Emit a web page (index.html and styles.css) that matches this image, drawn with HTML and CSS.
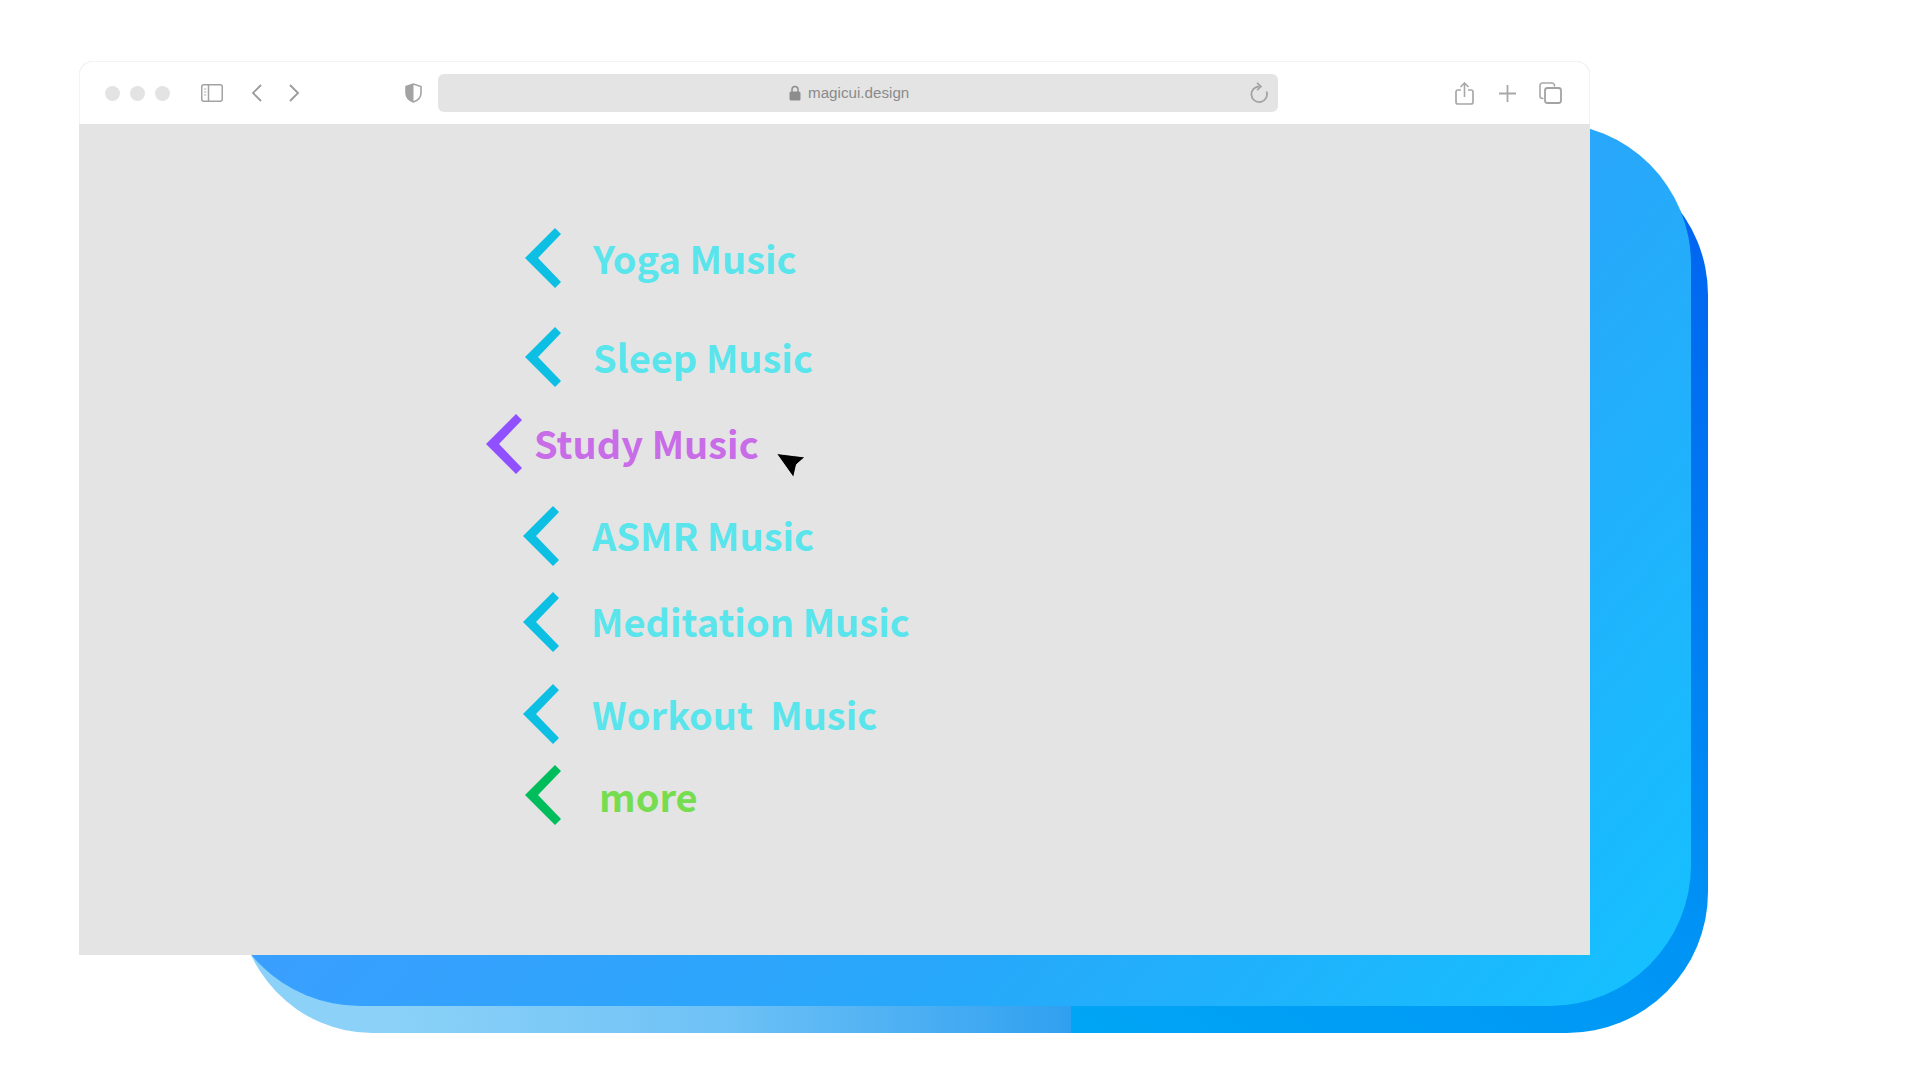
FILE: index.html
```html
<!DOCTYPE html>
<html lang="en">
<head>
<meta charset="utf-8">
<title>magicui.design</title>
<link rel="stylesheet" href="styles.css">
</head>
<body>
<main class="stage">
  <div class="backdrop backdrop-outer"></div>
  <div class="backdrop backdrop-inner"></div>
  <section class="window">
    <header class="toolbar">
      <span class="dot dot-first"></span><span class="dot dot-next"></span><span class="dot dot-next"></span>
      <svg class="tool tool-sidebar" width="22" height="18" viewBox="0 0 22 18" fill="none"><rect x=".75" y=".75" width="20.5" height="16.500" rx="2" stroke="#a3a3a3" stroke-width="1.500"/><path d="M7.500 1v16" stroke="#a3a3a3" stroke-width="1.500"/><path d="M3 5h2.200M3 8h2.200M3 11h2.200" stroke="#b0b0b0" stroke-width="1.200"/></svg>
      <svg class="tool tool-back" width="11" height="18" viewBox="0 0 11 18" fill="none"><path d="M10 1 2 9l8 8" stroke="#9c9c9c" stroke-width="1.900"/></svg>
      <svg class="tool tool-forward" width="11" height="18" viewBox="0 0 11 18" fill="none"><path d="m1 1 8 8-8 8" stroke="#9c9c9c" stroke-width="1.900"/></svg>
      <svg class="tool tool-shield" width="17" height="20" viewBox="0 0 17 20" fill="none"><path d="M8.500 1 1 3.500V10c0 4.500 3.500 7.500 7.500 9 4-1.500 7.500-4.500 7.500-9V3.500L8.500 1Z" stroke="#a3a3a3" stroke-width="1.600"/><path d="M8.500 1 1 3.500V10c0 4.500 3.500 7.500 7.500 9V1Z" fill="#a3a3a3"/></svg>
      <div class="url">
        <svg class="lock" width="12" height="16" viewBox="0 0 12 16" fill="none"><path d="M3 7V4.500a3 3 0 0 1 6 0V7" stroke="#8d8d8d" stroke-width="1.500"/><rect x=".5" y="6.500" width="11" height="9" rx="1.500" fill="#8d8d8d"/></svg>
        <span class="url-text">magicui.design</span>
        <svg class="reload" width="19" height="22" viewBox="0 0 19 22" fill="none"><path d="M10.500 4.500a7.800 7.800 0 1 0 7 5" stroke="#a3a3a3" stroke-width="1.800"/><path d="m8 .8 4 3.800-4 3.600" stroke="#a3a3a3" stroke-width="1.600"/></svg>
      </div>
      <svg class="tool tool-share" width="19" height="23" viewBox="0 0 19 23" fill="none"><path d="M6 8H3a2 2 0 0 0-2 2v10a2 2 0 0 0 2 2h13a2 2 0 0 0 2-2V10a2 2 0 0 0-2-2h-3" stroke="#a8a8a8" stroke-width="1.700"/><path d="M9.500 15V1.500M5.500 5l4-4 4 4" stroke="#a8a8a8" stroke-width="1.600"/></svg>
      <svg class="tool tool-plus" width="17" height="17" viewBox="0 0 17 17" fill="none"><path d="M8.500 0v17M0 8.500h17" stroke="#a8a8a8" stroke-width="1.800"/></svg>
      <svg class="tool tool-tabs" width="23" height="22" viewBox="0 0 23 22" fill="none"><path d="M4.500 16.500H3.500a2.500 2.500 0 0 1-2.500-2.500V3.500A2.500 2.500 0 0 1 3.500 1H13a2.500 2.500 0 0 1 2.500 2.500v1" stroke="#a8a8a8" stroke-width="1.600"/><rect x="6" y="6" width="16" height="15" rx="2.500" stroke="#a3a3a3" stroke-width="1.800"/></svg>
    </header>
    <ul class="menu">
      <li class="item item-yoga">
        <svg class="chev chev-cyan" width="36" height="60" viewBox="0 0 36 60"><polygon points="0,30 30,0 36,6 13,30 36,54 30,60"/></svg>
        <span class="label label-cyan">Yoga Music</span>
      </li>
      <li class="item item-sleep">
        <svg class="chev chev-cyan" width="36" height="60" viewBox="0 0 36 60"><polygon points="0,30 30,0 36,6 13,30 36,54 30,60"/></svg>
        <span class="label label-cyan">Sleep Music</span>
      </li>
      <li class="item item-study">
        <svg class="chev chev-violet" width="36" height="60" viewBox="0 0 36 60"><polygon points="0,30 30,0 36,6 13,30 36,54 30,60"/></svg>
        <span class="label label-violet">Study Music</span>
        <svg class="cursor" width="32" height="28" viewBox="0 0 32 28"><polygon points="1.500,1.500 30,5 21.500,12.500 18.500,25.500" fill="#000" stroke="#fff" stroke-width=".8"/></svg>
      </li>
      <li class="item item-asmr">
        <svg class="chev chev-cyan" width="36" height="60" viewBox="0 0 36 60"><polygon points="0,30 30,0 36,6 13,30 36,54 30,60"/></svg>
        <span class="label label-cyan">ASMR Music</span>
      </li>
      <li class="item item-meditation">
        <svg class="chev chev-cyan" width="36" height="60" viewBox="0 0 36 60"><polygon points="0,30 30,0 36,6 13,30 36,54 30,60"/></svg>
        <span class="label label-cyan">Meditation Music</span>
      </li>
      <li class="item item-workout">
        <svg class="chev chev-cyan" width="36" height="60" viewBox="0 0 36 60"><polygon points="0,30 30,0 36,6 13,30 36,54 30,60"/></svg>
        <span class="label label-cyan">Workout  Music</span>
      </li>
      <li class="item item-more">
        <svg class="chev chev-green" width="36" height="60" viewBox="0 0 36 60"><polygon points="0,30 30,0 36,6 13,30 36,54 30,60"/></svg>
        <span class="label label-green">more</span>
      </li>
    </ul>
  </section>
</main>
</body>
</html>
```

FILE: styles.css
```css
* { box-sizing: border-box; }
html, body { margin: 0; height: 100%; background: #fff; }
body { overflow: hidden; font-family: "Liberation Sans", Arial, sans-serif; }

.stage { position: relative; width: 1920px; height: 1080px; padding: 61px 0 0 79px; }

.backdrop { position: absolute; border-radius: 141px; }
.backdrop-outer {
  left: 237px; top: 154px; width: 1471px; height: 879px;
  border-bottom-left-radius: 135px 140px;
  background:
    linear-gradient(90deg, #8cd2f8 0, #8cd2f8 140px, #6fc2f6 480px, #2fa0f0 834px, transparent 834px),
    linear-gradient(to bottom left, #0060f0 0, #0093f5 45%, #00a8f5 75%, #00a8f5 100%);
}
.backdrop-inner {
  left: 219px; top: 123px; width: 1472px; height: 883px;
  background: linear-gradient(130deg, #3a9fff 0, #3a9fff 33%, #27a8fa 66%, #14c2ff 100%);
}

.window { position: relative; width: 1511px; height: 894px; display: flex; flex-direction: column; background: #e4e4e4; border-radius: 14px 14px 0 0; }

.toolbar { height: 63px; flex: none; display: flex; align-items: center; background: #fff; border: 1px solid #f3f3f3; border-bottom: 0; border-radius: 14px 14px 0 0; }
.dot { width: 15px; height: 15px; border-radius: 50%; background: #e3e3e3; flex: none; }
.dot-first { margin-left: 25px; }
.dot-next { margin-left: 10px; }
.tool { flex: none; }
.tool-sidebar { margin-left: 31px; }
.tool-back { margin-left: 28px; }
.tool-forward { margin-left: 27px; }
.tool-shield { margin-left: 105px; }
.tool-share { margin-left: 177px; }
.tool-plus { margin-left: 25px; }
.tool-tabs { margin-left: 23px; }

.url { width: 840px; height: 38px; margin-left: 16px; flex: none; display: flex; align-items: center; padding: 0 10px 0 351px; background: #e4e4e4; border-radius: 6px; }
.lock { flex: none; }
.url-text { margin-left: 7px; margin-top: -2px; font-size: 15.200px; color: #8a8a8a; }
.reload { margin-left: auto; flex: none; }

.menu { list-style: none; margin: 0; padding: 104px 0 0 0; display: flex; flex-direction: column; }
.item { position: relative; display: flex; align-items: flex-start; height: 60px; margin-top: var(--gap); margin-left: var(--left); }
.chev { flex: none; }
.chev-cyan { fill: #0cbfe3; }
.chev-violet { fill: #9150ff; }
.chev-green { fill: #00bd5c; }
.label { margin-left: var(--space); margin-top: var(--drop); font-family: "Noto Sans CJK SC", "Noto Sans", sans-serif; font-weight: 700; font-size: 38px; line-height: 60px; white-space: pre; }
.label-cyan { color: #5ae4ec; }
.label-violet { color: #c86ce8; }
.label-green { color: #76dc50; }

.item-yoga { --gap: 0px; --left: 446px; --space: 32px; --drop: 0px; }
.item-sleep { --gap: 39px; --left: 446px; --space: 32px; --drop: 0px; }
.item-study { --gap: 27px; --left: 407px; --space: 12px; --drop: -1px; }
.item-asmr { --gap: 32px; --left: 444px; --space: 33px; --drop: -1px; }
.item-meditation { --gap: 26px; --left: 444px; --space: 32px; --drop: -1px; }
.item-workout { --gap: 32px; --left: 444px; --space: 33px; --drop: 0px; }
.item-more { --gap: 21px; --left: 446px; --space: 38px; --drop: 1px; }

.cursor { position: absolute; left: 289px; top: 38px; }
```
